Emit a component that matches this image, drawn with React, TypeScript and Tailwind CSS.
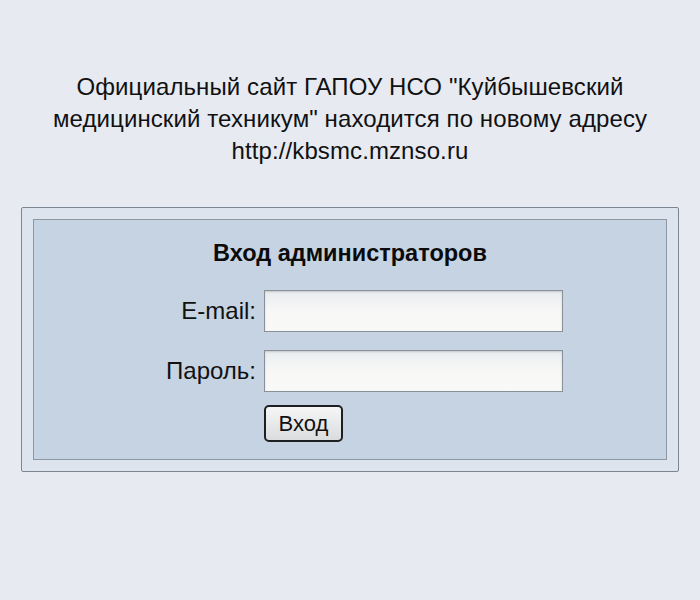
export default function App() {
  return (
    <div className="min-h-[600px] w-[700px] bg-[#e7eaf1] pt-[71px] font-['Liberation_Sans',Arial,sans-serif] text-[#111]">
      <div className="text-center text-[24px] leading-[32px] tracking-[0.1px]">
        <p>Официальный сайт ГАПОУ НСО "Куйбышевский</p>
        <p>медицинский техникум" находится по новому адресу</p>
        <p>http://kbsmc.mznso.ru</p>
      </div>

      <div className="mx-[21px] mt-[40px] rounded-[2px] border border-[#7d8590] bg-[#dde4ed] p-[11px]">
        <div className="border border-[#8e98a5] bg-[#c6d3e2] pt-[21px] pb-[17px]">
          <h1 className="text-center text-[23.5px] leading-[24px] font-bold text-[#0b0b0b]">
            Вход администраторов
          </h1>

          <div className="mt-[25px] flex items-center">
            <label className="w-[223px] pr-[1px] text-right text-[24px]">E-mail:</label>
            <input
              type="text"
              className="ml-[7px] h-[42px] w-[299px] border border-[#8a9098] bg-gradient-to-b from-[#e9ecef] via-[#f7f8f6] to-[#f9faf7] shadow-[inset_0_1px_2px_rgba(0,0,0,0.15)] outline-none"
            />
          </div>

          <div className="mt-[18px] flex items-center">
            <label className="w-[223px] pr-[1px] text-right text-[24px]">Пароль:</label>
            <input
              type="password"
              className="ml-[7px] h-[42px] w-[299px] border border-[#8a9098] bg-gradient-to-b from-[#e9ecef] via-[#f7f8f6] to-[#f9faf7] shadow-[inset_0_1px_2px_rgba(0,0,0,0.15)] outline-none"
            />
          </div>

          <div className="mt-[13px] flex">
            <button className="ml-[230px] h-[37px] w-[79px] rounded-[5px] border-2 border-[#1d1f22] bg-gradient-to-b from-[#f6f6f6] to-[#dadcde] text-[22px] leading-[24px] text-[#111]">
              Вход
            </button>
          </div>
        </div>
      </div>
    </div>
  );
}
